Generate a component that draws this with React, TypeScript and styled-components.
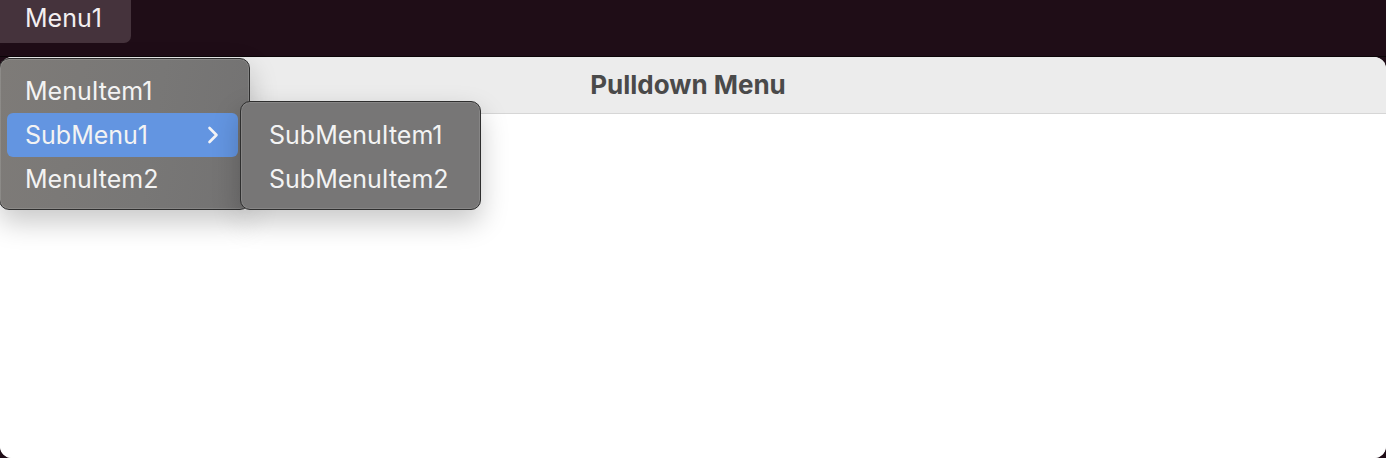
import React from 'react';
import styled, { createGlobalStyle } from 'styled-components';

const GlobalStyle = createGlobalStyle`
  html, body {
    margin: 0;
    padding: 0;
    background: #1f0d17;
    overflow: hidden;
  }
  body {
    font-family: Inter, "Noto Sans", "Liberation Sans", sans-serif;
    -webkit-font-smoothing: antialiased;
  }
`;

const subItems = ['SubMenuItem1', 'SubMenuItem2'];

function Chevron() {
  return (
    <svg width="12" height="18" viewBox="0 0 12 18" fill="none">
      <path d="M2.5 2 L9.5 9 L2.5 16" stroke="#f4f4f6" strokeWidth="2.6" strokeLinecap="round" strokeLinejoin="round" />
    </svg>
  );
}

export default function App() {
  return (
    <Style.Screen>
      <GlobalStyle />
      <Style.MenuBar>
        <Style.BarItem>Menu1</Style.BarItem>
      </Style.MenuBar>
      <Style.Window>
        <Style.TitleBar>Pulldown Menu</Style.TitleBar>
        <Style.Content />
      </Style.Window>

      <Style.Dropdown>
        <Style.Item>MenuItem1</Style.Item>
        <Style.Item $active>
          SubMenu1
          <Chevron />
        </Style.Item>
        <Style.Item>MenuItem2</Style.Item>
      </Style.Dropdown>

      <Style.SubMenu>
        {subItems.map(label => (
          <Style.Item key={label}>{label}</Style.Item>
        ))}
      </Style.SubMenu>
    </Style.Screen>
  );
}

const Style = {
  Screen: styled.div`
    position: relative;
    width: 1386px;
    height: 458px;
    display: flex;
    flex-direction: column;
    background: #1f0d17;
  `,
  MenuBar: styled.div`
    height: 57px;
    flex: 0 0 57px;
    box-sizing: border-box;
    display: flex;
    align-items: flex-start;
    background: #1f0d17;
    border-bottom: 1px solid #0c0508;
  `,
  BarItem: styled.div`
    height: 43px;
    width: 131px;
    box-sizing: border-box;
    padding-left: 25px;
    padding-bottom: 7px;
    display: flex;
    align-items: center;
    background: #45333c;
    border-radius: 0 0 7px 0;
    color: #f3eff1;
    font-size: 25px;
  `,
  Window: styled.div`
    flex: 1;
    display: flex;
    flex-direction: column;
    background: #ffffff;
    border-radius: 12px;
    overflow: hidden;
  `,
  TitleBar: styled.div`
    height: 57px;
    flex: 0 0 57px;
    box-sizing: border-box;
    display: flex;
    align-items: center;
    justify-content: center;
    padding-right: 10px;
    padding-bottom: 2px;
    background: #ececec;
    border-bottom: 1px solid #d6d6d6;
    color: #4a4a4a;
    font-size: 26px;
    font-weight: 700;
  `,
  Content: styled.div`
    flex: 1;
    background: #ffffff;
  `,
  Dropdown: styled.div`
    position: absolute;
    left: -1px;
    top: 58px;
    width: 251px;
    height: 152px;
    box-sizing: border-box;
    padding: 10px 11px 10px 7px;
    display: flex;
    flex-direction: column;
    background: linear-gradient(100deg, #7e7b78 0%, #787776 60%, #737272 100%);
    border: 1px solid #2e2e2e;
    border-radius: 10px;
    box-shadow: inset 0 0 0 1px rgba(255, 255, 255, 0.12), 0 12px 28px rgba(0, 0, 0, 0.22);
  `,
  SubMenu: styled.div`
    position: absolute;
    left: 240px;
    top: 101px;
    width: 241px;
    height: 109px;
    box-sizing: border-box;
    padding: 11px 6px 10px 10px;
    display: flex;
    flex-direction: column;
    background: #777676;
    border: 1px solid #2e2e2e;
    border-radius: 10px;
    box-shadow: inset 0 0 0 1px rgba(255, 255, 255, 0.12), 0 12px 28px rgba(0, 0, 0, 0.22);
  `,
  Item: styled.div<{ $active?: boolean }>`
    height: 44px;
    flex: 0 0 44px;
    box-sizing: border-box;
    padding: 0 19px 0 18px;
    display: flex;
    align-items: center;
    justify-content: space-between;
    border-radius: 6px;
    background: ${p => (p.$active ? '#6395e1' : 'transparent')};
    color: #f3f3f3;
    font-size: 25px;
  `,
};
